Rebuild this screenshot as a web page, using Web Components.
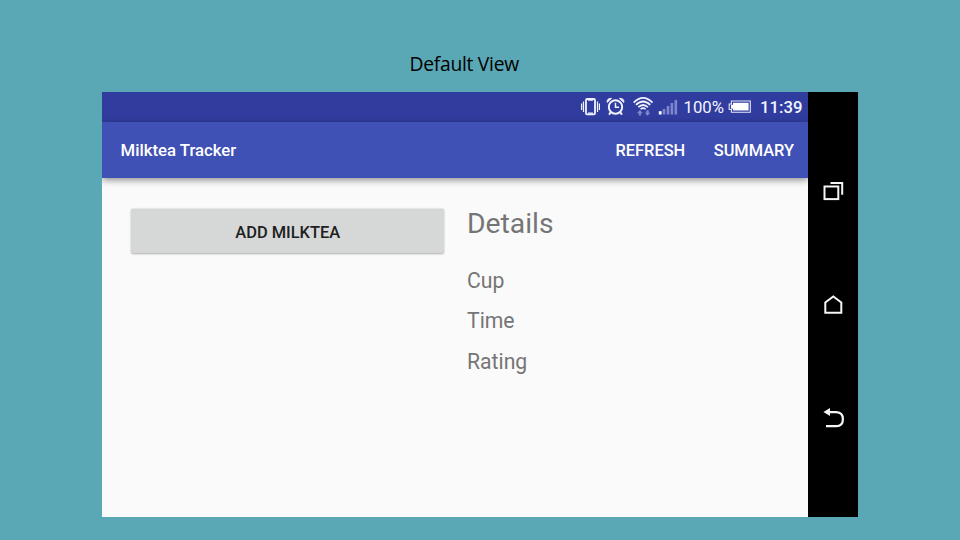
<!DOCTYPE html>
<html lang="en">
<head>
<meta charset="utf-8">
<title>Milktea Tracker</title>
<style>
html,body{margin:0;height:100%;background:#5aa7b5;overflow:hidden}
</style>
</head>
<body>
<slide-view caption="Default View">
  <phone-frame>
    <status-bar slot="status" battery="100%" time="11:39"></status-bar>
    <app-bar slot="bar">Milktea Tracker
      <bar-action slot="actions">REFRESH</bar-action>
      <bar-action slot="actions">SUMMARY</bar-action>
    </app-bar>
    <raised-button slot="list">ADD MILKTEA</raised-button>
    <detail-panel slot="detail" heading="Details">
      <detail-row>Cup</detail-row>
      <detail-row>Time</detail-row>
      <detail-row>Rating</detail-row>
    </detail-panel>
    <nav-rail slot="nav"></nav-rail>
  </phone-frame>
</slide-view>
<script>
const define = (name, markup) => customElements.define(name, class extends HTMLElement {
  constructor() {
    super();
    const t = document.createElement('template');
    t.innerHTML = markup;
    this.attachShadow({mode: 'open'}).append(t.content.cloneNode(true));
  }
  connectedCallback() {
    this.shadowRoot.querySelectorAll('[data-attr]').forEach(n => {
      n.textContent = this.getAttribute(n.dataset.attr);
    });
  }
});

define('slide-view', `<style>
:host{display:flex;flex-direction:column;width:960px;height:540px;box-sizing:border-box;padding:50px 102px 23px}
.caption{height:42px;padding-left:307.5px;font:19.3px/27px "Open Sans",sans-serif;letter-spacing:-.28px;color:#000;box-sizing:border-box}
</style><div class="caption" data-attr="caption"></div><slot></slot>`);

define('phone-frame', `<style>
:host{display:flex;width:756px;height:425px;background:#000;font-family:Roboto,sans-serif}
.screen{width:706.4px;display:flex;flex-direction:column;background:#fafafa;overflow:hidden}
.body{display:grid;grid-template-columns:313.5px 1fr;column-gap:23px;padding:31px 28.5px 0;align-items:start}
</style><div class="screen"><slot name="status"></slot><slot name="bar"></slot>
<div class="body"><slot name="list"></slot><slot name="detail"></slot></div></div><slot name="nav"></slot>`);

define('status-bar', `<style>
:host{display:flex;align-items:center;justify-content:flex-end;height:29.5px;flex:none;box-sizing:border-box;padding-right:6px;background:#303d9f;color:#f4f5ff;font-size:16.7px;line-height:29px}
svg{display:block;flex:none}
.pct{width:40px;margin-left:6px;padding-top:1px;white-space:nowrap}
.time{font-weight:500;margin-left:8px;padding-top:1px;white-space:nowrap}
</style>
<svg width="98" height="29" viewBox="580 92 98 29" fill="none" stroke="#f1f3ff">
<rect x="586" y="99" width="9" height="15.4" rx="1.2" stroke-width="1.8"/>
<path d="M588 100.2h5M588 113.2h5" stroke-width="1.2"/>
<path d="M583.5 101.5v10.5M581.6 103.5v6.5M597.5 101.5v10.5M599.4 103.5v6.5" stroke-width="1.2"/>
<circle cx="615.5" cy="107" r="6.7" stroke-width="1.9"/>
<path d="M615.5 102.8v4.5h3.6" stroke-width="1.5"/>
<path d="M607.2 102.4q-.7-4 4.3-4.1zM623.8 102.4q.7-4-4.3-4.1z" fill="#f1f3ff" stroke-width="1"/>
<path d="M611 112l-2 2.7M620 112l2 2.7" stroke-width="2"/>
<path d="M633.7 102.6q9.4-9.6 18.8 0M636 104.9q7.1-6.9 14.2 0M638.3 107.2q4.8-4.5 9.6 0" stroke-width="1.8"/>
<path d="M640.6 109.2q2.5-2.2 5 0" stroke-width="1.6"/>
<g fill="#7f88cd" stroke="none"><path d="M639.9 110l2.9 3h-1.7v2.6h-2.4v-2.6H637zM647.5 115.8l-2.9-3h1.7v-2.6h2.4v2.6h1.7z"/>
<path d="M662.7 109h2.6v5.5h-2.6zM666.7 106h2.6v8.5h-2.6zM670.6 103h2.6v11.5h-2.6zM674.5 100h2.6v14.5h-2.6z"/></g>
<rect x="658.8" y="111.2" width="2.8" height="3.3" fill="#fff" stroke="none"/>
</svg>
<span class="pct" data-attr="battery"></span>
<svg width="24" height="29" viewBox="729 92 24 29" style="margin-left:4.5px"><path d="M732.4 101h18.9v11.2h-18.9v-2.7h-2.2v-5.5h2.2z" fill="none" stroke="#e5e7fb" stroke-width="1.1"/><path d="M734 102.8h15.6v7.6H734v-1.7h-2v-3.9h2z" fill="#fff"/></svg>
<span class="time" data-attr="time"></span>`);

define('app-bar', `<style>
:host{display:flex;align-items:center;height:56.5px;flex:none;box-sizing:border-box;padding:1.5px 14.4px 0 18.5px;background:#3f51b5;color:#fff;font-size:16.75px;font-weight:500;box-shadow:0 2px 7px rgba(0,0,0,.45)}
.title{flex:1;padding-bottom:1.5px}.actions{display:flex;gap:28.5px;font-size:16.4px}
</style><div class="title"><slot></slot></div><div class="actions"><slot name="actions"></slot></div>`);

define('bar-action', `<style>:host{display:block;white-space:nowrap}</style><slot></slot>`);

define('raised-button', `<style>
:host{display:flex;align-items:center;justify-content:center;height:44px;box-sizing:border-box;padding:2px 0 0 1px;border-radius:2px;background:#d6d8d7;color:#202020;font-size:16.45px;font-weight:500;box-shadow:0 .5px 2px rgba(0,0,0,.3)}
</style><slot></slot>`);

define('detail-panel', `<style>
:host{display:flex;flex-direction:column;color:#757575}
.heading{font-size:28.3px;line-height:34px;margin:-2px 0 21.5px}
</style><div class="heading" data-attr="heading"></div><slot></slot>`);

define('detail-row', `<style>:host{display:block;height:40.5px;font-size:21.2px;line-height:36px}</style><slot></slot>`);

define('nav-rail', `<style>
:host{display:flex;flex-direction:column;align-items:center;width:49.6px;height:425px;box-sizing:border-box;padding-top:84px;gap:84px;background:#000}
svg{display:block;width:30px;height:30px;flex:none;fill:none;stroke:#f5f5f5;stroke-width:2}
</style>
<svg viewBox="818 176 30 30"><rect x="824.5" y="186.5" width="13.8" height="12.6"/><path d="M830.5 183h11.7v11.8"/></svg>
<svg viewBox="818 290 30 30"><path d="M825.3 312.8v-10.3l8-6.1 8 6.1v10.3z"/></svg>
<svg viewBox="818 404 30 30"><path d="M828 412.2h8.4q6.5.3 6.5 7t-6.5 7H826" stroke-width="2.2"/><path d="M823.4 412l6.6-4v8z" fill="#f5f5f5" stroke="none"/></svg>`);
</script>
</body>
</html>
